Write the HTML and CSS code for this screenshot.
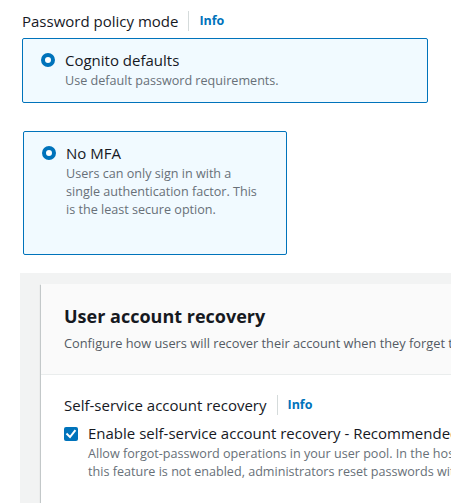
FILE: index.html
```html
<!DOCTYPE html>
<html lang="en">
<head>
    <meta charset="UTF-8">
    <meta name="viewport" content="width=device-width, initial-scale=1.0">
    <title>User pool settings</title>
    <link rel="stylesheet" href="styles.css">
</head>
<body>
    <div class="field-label policy-label">
        <span>Password policy mode</span>
        <a class="info-link">Info</a>
    </div>
    <div class="tile tile-wide">
        <span class="radio"></span>
        <div class="tile-text">
            <div class="tile-title">Cognito defaults</div>
            <div class="tile-desc">Use default password requirements.</div>
        </div>
    </div>

    <div class="tile tile-narrow">
        <span class="radio"></span>
        <div class="tile-text">
            <div class="tile-title">No MFA</div>
            <div class="tile-desc">Users can only sign in with a single authentication factor. This is the least secure option.</div>
        </div>
    </div>

    <div class="panel">
        <div class="container">
            <div class="container-header">
                <h2>User account recovery</h2>
                <p>Configure how users will recover their account when they forget their password.</p>
            </div>
            <div class="container-body">
                <div class="field-label">
                    <span>Self-service account recovery</span>
                    <a class="info-link">Info</a>
                </div>
                <div class="check-row">
                    <span class="checkbox">
                        <svg width="14" height="14" viewBox="0 0 14 14">
                            <path d="M3.2 7.2 L6 10 L10.8 4" fill="none" stroke="#ffffff" stroke-width="2" stroke-linecap="square"/>
                        </svg>
                    </span>
                    <div>
                        <div class="check-title">Enable self-service account recovery - Recommended</div>
                        <div class="check-desc">Allow forgot-password operations in your user pool. In the hosted UI, users can reset a password they forgot. When<br>this feature is not enabled, administrators reset passwords with the Cognito API.</div>
                    </div>
                </div>
            </div>
        </div>
    </div>
</body>
</html>
```

FILE: styles.css
```css
html, body {
    margin: 0;
    height: 100%;
}

body {
    font-family: 'Open Sans', sans-serif;
    font-size: 15px;
    color: #16191f;
    background-color: #ffffff;
    overflow: hidden;
}

.field-label {
    display: flex;
    align-items: center;
    line-height: 20px;
}

.field-label span {
    padding-right: 10px;
    border-right: 1px solid #d5dbdb;
}

.policy-label {
    padding: 11px 0 0 22px;
}

.info-link {
    padding-left: 10px;
    font-size: 12.5px;
    font-weight: bold;
    color: #0073bb;
}

.tile {
    display: flex;
    align-items: flex-start;
    box-sizing: border-box;
    padding: 11px 18px 0 18px;
    background-color: #f1faff;
    border: 1px solid #0073bb;
    border-radius: 2px;
}

.tile-wide {
    margin: 7px 0 0 22px;
    width: 406px;
    height: 65px;
}

.tile-narrow {
    margin: 28px 0 0 23px;
    width: 264px;
    height: 124px;
}

.radio {
    flex: none;
    width: 14px;
    height: 14px;
    margin-top: 3px;
    margin-right: 10px;
    box-sizing: border-box;
    border: 4px solid #0073bb;
    border-radius: 50%;
    background-color: #ffffff;
}

.tile-title {
    line-height: 20px;
}

.tile-desc {
    margin-top: 2px;
    font-size: 12.6px;
    line-height: 18px;
    color: #687078;
}

.panel {
    margin: 18px 0 0 20px;
    padding: 11px 0 0 21px;
    height: 100%;
    background-color: #f2f3f3;
}

.container {
    width: 700px;
    height: 100%;
    background-color: #ffffff;
    box-shadow: 0 1px 1px 0 rgba(0, 28, 36, 0.3), -1px 1px 1px 0 rgba(0, 28, 36, 0.15);
}

.container-header {
    padding: 20px 0 22px 23px;
    background-color: #fafafa;
    border-bottom: 1px solid #eaeded;
}

.container-header h2 {
    margin: 0;
    font-size: 18px;
    line-height: 24px;
    font-weight: bold;
}

.container-header p {
    margin: 6px 0 0 0;
    font-size: 12.8px;
    line-height: 18px;
    color: #545b64;
    white-space: nowrap;
}

.container-body {
    padding: 20px 0 0 23px;
}

.check-row {
    display: flex;
    align-items: flex-start;
    margin-top: 8px;
}

.checkbox {
    flex: none;
    display: flex;
    width: 14px;
    height: 14px;
    margin: 4px 10px 0 0;
    border-radius: 2px;
    background-color: #0073bb;
}

.check-title {
    line-height: 20px;
    white-space: nowrap;
}

.check-desc {
    margin-top: 2px;
    font-size: 12.6px;
    line-height: 18px;
    color: #687078;
    white-space: nowrap;
}
```
